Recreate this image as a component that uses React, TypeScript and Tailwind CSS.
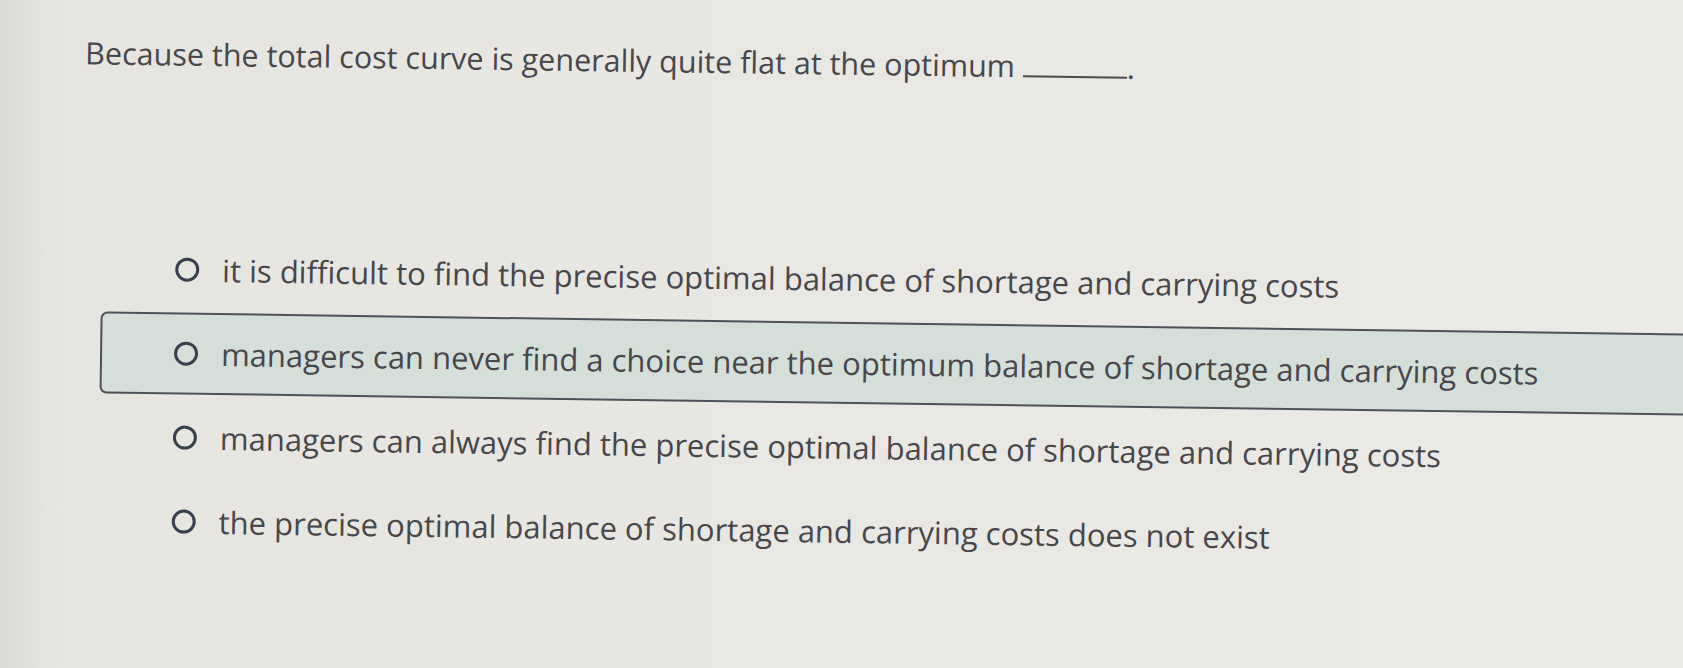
const options = [
  { text: 'it is difficult to find the precise optimal balance of shortage and carrying costs', active: false },
  { text: 'managers can never find a choice near the optimum balance of shortage and carrying costs', active: true },
  { text: 'managers can always find the precise optimal balance of shortage and carrying costs', active: false },
  { text: 'the precise optimal balance of shortage and carrying costs does not exist', active: false },
];

function Radio() {
  return <span className="block w-[24px] h-[24px] shrink-0 rounded-full border-[3.5px] border-[#38404d]" />;
}

export default function App() {
  return (
    <div className="w-[1683px] h-[668px] overflow-hidden bg-linear-to-r from-[#d9d8d3] via-[#e6e5e0] via-[3%] to-[#ebeae6] font-['Open_Sans',sans-serif] text-[#47464b]">
      <div className="origin-top-left rotate-[0.8deg] pt-[34px]">
        <p className="pl-[86px] text-[30.5px] leading-[34px] whitespace-nowrap">
          Because the total cost curve is generally quite flat at the optimum{' '}
          <span className="inline-block w-[104px] border-b-2 border-[#4a4a4f] align-baseline" />.
        </p>
        <div className="mt-[157px] flex flex-col">
          {options.map((o) => (
            <div
              key={o.text}
              className={
                o.active
                  ? 'ml-[105px] -mr-[40px] h-[82px] flex items-center gap-[23px] pl-[72px] rounded-[7px] border-2 border-[#4d5158] bg-[#d5dfda] my-[1px]'
                  : 'ml-[105px] h-[84px] flex items-center gap-[23px] pl-[74px]'
              }
            >
              <Radio />
              <span className="text-[31px] leading-[38px] whitespace-nowrap">{o.text}</span>
            </div>
          ))}
        </div>
      </div>
    </div>
  );
}
